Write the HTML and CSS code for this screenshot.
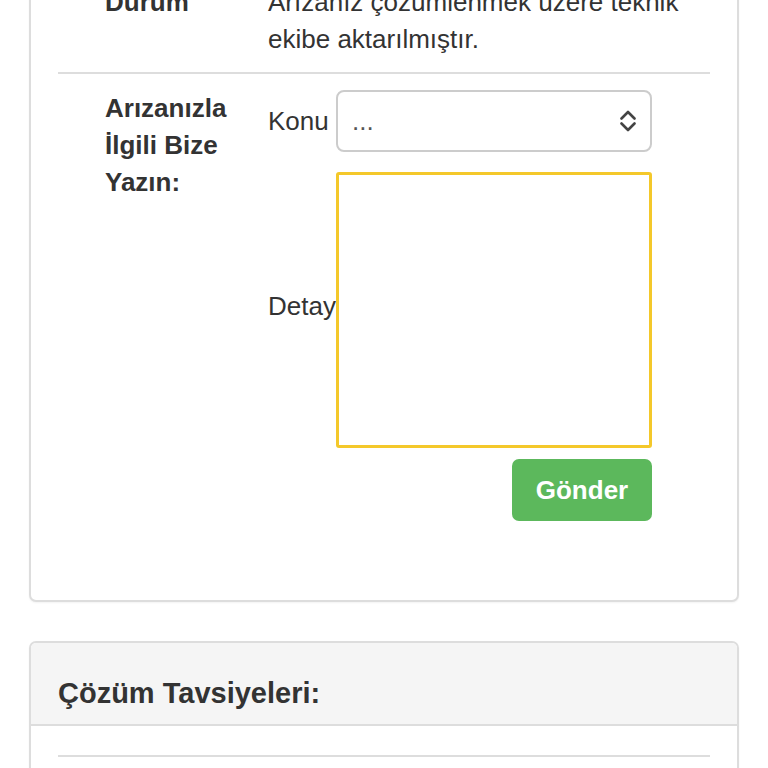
FILE: index.html
```html
<!DOCTYPE html>
<html lang="tr">
<head>
<meta charset="utf-8">
<title>Arıza Takip</title>
<link rel="stylesheet" href="styles.css">
</head>
<body>
<div class="page">
  <section class="card card-info">
    <div class="info-row">
      <div class="info-label">Durum</div>
      <div class="info-value">Arızanız çözümlenmek üzere teknik ekibe aktarılmıştır.</div>
    </div>
    <div class="info-row info-row-form">
      <div class="info-label">Arızanızla İlgili Bize Yazın:</div>
      <div class="info-value">
        <form class="contact-form">
          <label class="form-label" for="konu">Konu</label>
          <div class="select-wrap">
            <select id="konu" class="form-select">
              <option>...</option>
            </select>
            <svg class="select-icon" width="16" height="22" viewBox="0 0 16 22" aria-hidden="true">
              <polyline points="1.5,8.5 8,2 14.5,8.5" fill="none" stroke="#444" stroke-width="2.6" stroke-linecap="round" stroke-linejoin="round"/>
              <polyline points="1.5,13.5 8,20 14.5,13.5" fill="none" stroke="#444" stroke-width="2.6" stroke-linecap="round" stroke-linejoin="round"/>
            </svg>
          </div>
          <label class="form-label form-label-detay" for="detay">Detay</label>
          <textarea id="detay" class="form-textarea"></textarea>
          <button type="button" class="btn-send">Gönder</button>
        </form>
      </div>
    </div>
  </section>

  <section class="card panel">
    <div class="panel-heading">
      <h3 class="panel-title">Çözüm Tavsiyeleri:</h3>
    </div>
    <div class="panel-body">
      <hr class="panel-rule">
    </div>
  </section>
</div>
</body>
</html>
```

FILE: styles.css
```css
html, body {
  margin: 0;
  padding: 0;
  background: #ffffff;
}

body {
  font-family: "Liberation Sans", Arial, Helvetica, sans-serif;
  font-size: 26px;
  line-height: 37px;
  color: #333333;
  overflow: hidden;
}

.page {
  padding: 0 29px;
}

.card {
  border: 2px solid #dddddd;
  border-radius: 7px;
  background: #ffffff;
  box-shadow: 0 1px 2px rgba(0, 0, 0, 0.05);
}

.card-info {
  margin-top: -40px;
  padding: 6px 27px 63px;
}

.info-row {
  display: grid;
  grid-template-columns: 210px 1fr;
  padding: 16px 0 14px;
}

.info-row-form {
  border-top: 2px solid #dddddd;
  padding: 16px 0 16px;
}

.info-label {
  font-weight: bold;
  padding-left: 47px;
  padding-right: 20px;
}

.contact-form {
  display: grid;
  grid-template-columns: 68px 316px;
  row-gap: 20px;
  align-items: center;
  margin: 0;
}

.form-label {
  font-weight: normal;
}

.form-label-detay {
  margin-bottom: 8px;
}

.select-wrap {
  position: relative;
}

.form-select {
  display: block;
  width: 316px;
  height: 62px;
  box-sizing: border-box;
  border: 2px solid #cccccc;
  border-radius: 8px;
  background: #ffffff;
  padding: 0 40px 0 14px;
  font-family: "Liberation Sans", Arial, sans-serif;
  font-size: 26px;
  color: #555555;
  -webkit-appearance: none;
  appearance: none;
  outline: none;
}

.select-icon {
  position: absolute;
  right: 16px;
  top: 20px;
}

.form-textarea {
  display: block;
  width: 316px;
  height: 276px;
  box-sizing: border-box;
  border: 3px solid #f4c82a;
  border-radius: 3px;
  resize: none;
  margin: 0;
  padding: 10px;
  font-family: "Liberation Sans", Arial, sans-serif;
  font-size: 26px;
  outline: none;
}

.btn-send {
  grid-column: 2;
  justify-self: end;
  margin-top: -9px;
  width: 140px;
  height: 62px;
  border: none;
  border-radius: 7px;
  background: #5cb85c;
  color: #ffffff;
  font-family: "Liberation Sans", Arial, sans-serif;
  font-size: 26px;
  font-weight: bold;
  padding: 0;
}

.panel {
  margin-top: 39px;
  overflow: hidden;
}

.panel-heading {
  background: #f5f5f5;
  border-bottom: 2px solid #dddddd;
  padding: 34px 27px 15px;
}

.panel-title {
  margin: 0;
  font-size: 29px;
  line-height: 32px;
  font-weight: bold;
  color: #333333;
}

.panel-body {
  padding: 29px 27px 40px;
}

.panel-rule {
  margin: 0;
  border: none;
  border-top: 2px solid #dddddd;
}
```
